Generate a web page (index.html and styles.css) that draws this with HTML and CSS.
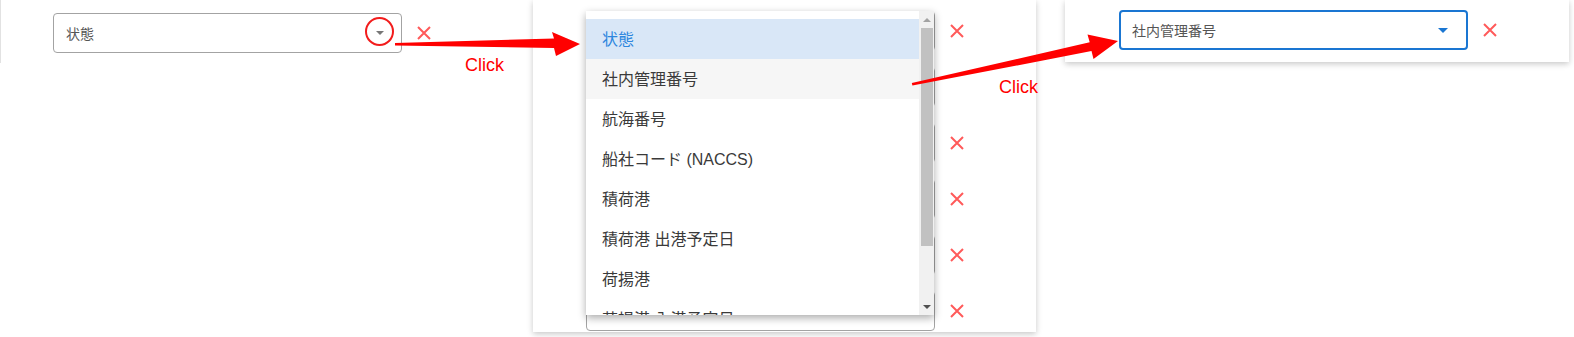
FILE: index.html
```html
<!DOCTYPE html>
<html lang="ja">
<head>
<meta charset="utf-8">
<title>Select annotation</title>
<link rel="stylesheet" href="styles.css">
</head>
<body>
<div class="stage">
  <div class="panel p1">
    <div class="row">
      <div class="select">
        <span class="val">状態</span>
        <span class="caret"></span>
        <span class="ring"></span>
      </div>
      <svg class="x" viewBox="0 0 14 14"><path d="M1 1L13 13M13 1L1 13"/></svg>
    </div>
  </div>

  <div class="panel p2">
    <div class="rows">
      <div class="row"><div class="select"><span class="val"></span><span class="caret"></span></div><svg class="x" viewBox="0 0 14 14"><path d="M1 1L13 13M13 1L1 13"/></svg></div>
      <div class="row"><div class="select"><span class="val"></span><span class="caret"></span></div><svg class="x hidden" viewBox="0 0 14 14"><path d="M1 1L13 13M13 1L1 13"/></svg></div>
      <div class="row"><div class="select"><span class="val"></span><span class="caret"></span></div><svg class="x" viewBox="0 0 14 14"><path d="M1 1L13 13M13 1L1 13"/></svg></div>
      <div class="row"><div class="select"><span class="val"></span><span class="caret"></span></div><svg class="x" viewBox="0 0 14 14"><path d="M1 1L13 13M13 1L1 13"/></svg></div>
      <div class="row"><div class="select"><span class="val"></span><span class="caret"></span></div><svg class="x" viewBox="0 0 14 14"><path d="M1 1L13 13M13 1L1 13"/></svg></div>
      <div class="row"><div class="select"><span class="val"></span><span class="caret"></span></div><svg class="x" viewBox="0 0 14 14"><path d="M1 1L13 13M13 1L1 13"/></svg></div>
    </div>
    <div class="menu">
      <div class="items">
        <div class="item sel">状態</div>
        <div class="item hover">社内管理番号</div>
        <div class="item">航海番号</div>
        <div class="item">船社コード (NACCS)</div>
        <div class="item">積荷港</div>
        <div class="item">積荷港 出港予定日</div>
        <div class="item">荷揚港</div>
        <div class="item">荷揚港 入港予定日</div>
      </div>
      <div class="sb">
        <div class="sb-btn"><span class="tri-up"></span></div>
        <div class="sb-track"><div class="thumb"></div></div>
        <div class="sb-btn"><span class="tri-down"></span></div>
      </div>
    </div>
  </div>

  <div class="panel p3">
    <div class="row">
      <div class="select focus">
        <span class="val">社内管理番号</span>
        <span class="caret blue"></span>
      </div>
      <svg class="x" viewBox="0 0 14 14"><path d="M1 1L13 13M13 1L1 13"/></svg>
    </div>
  </div>

  <svg class="arrows" width="1574" height="337" viewBox="0 0 1574 337">
    <polygon points="395,43 554,38.5 552,32 580,44 556,56 554,48 395,45.5"/>
    <polygon points="911.8,83 1089.7,42.3 1087.5,34.5 1118,41 1093.5,59 1091.5,51.1 912.4,85.6"/>
  </svg>
  <div class="click c1">Click</div>
  <div class="click c2">Click</div>
</div>
</body>
</html>
```

FILE: styles.css
```css
html, body {
  margin: 0;
  padding: 0;
  background: #ffffff;
}

body {
  font-family: "Liberation Sans", "Noto Sans CJK JP", sans-serif;
}

.stage {
  position: relative;
  width: 1574px;
  height: 337px;
  display: flex;
  align-items: flex-start;
  gap: 29px;
  overflow: hidden;
}

.panel {
  box-sizing: border-box;
  background: #ffffff;
  flex: none;
}

.p1 {
  width: 504px;
  height: 63px;
  border-left: 1px solid #e2e2e2;
  padding: 13px 0 0 52px;
}

.p2 {
  position: relative;
  width: 503px;
  height: 332px;
  padding: 11px 0 0 53px;
  box-shadow: 0 2px 6px rgba(0, 0, 0, 0.22);
}

.p3 {
  width: 504px;
  height: 62px;
  padding: 10px 0 0 54px;
  box-shadow: 0 2px 6px rgba(0, 0, 0, 0.22);
}

.rows {
  display: flex;
  flex-direction: column;
  gap: 16px;
}

.row {
  display: flex;
  align-items: center;
  gap: 15px;
  height: 40px;
}

.select {
  position: relative;
  box-sizing: border-box;
  width: 349px;
  height: 40px;
  border: 1px solid #a3a3a3;
  border-radius: 4px;
  display: flex;
  align-items: center;
  padding: 0 17px 0 12px;
  font-size: 14px;
  color: #555555;
  background: #ffffff;
}

.select.focus {
  border: 2px solid #1a76d2;
  padding: 0 18px 0 11px;
}

.val {
  flex: 1;
  white-space: nowrap;
}

.caret {
  width: 0;
  height: 0;
  border-left: 4px solid transparent;
  border-right: 4px solid transparent;
  border-top: 4px solid #777777;
}

.caret.blue {
  border-left-width: 5px;
  border-right-width: 5px;
  border-top: 5px solid #1a76d2;
}

.ring {
  position: absolute;
  left: 311px;
  top: 3px;
  width: 29px;
  height: 29px;
  box-sizing: border-box;
  border: 2px solid #f21c1c;
  border-radius: 50%;
}

.x {
  width: 14px;
  height: 14px;
  flex: none;
}

.x path {
  fill: none;
  stroke: #ff5a5a;
  stroke-width: 2;
}

.x.hidden {
  visibility: hidden;
}

.menu {
  position: absolute;
  left: 53px;
  top: 11px;
  width: 348px;
  height: 304px;
  background: #ffffff;
  display: flex;
  box-shadow: 0 3px 8px rgba(0, 0, 0, 0.33);
  z-index: 2;
}

.items {
  flex: 1;
  padding-top: 8px;
  overflow: hidden;
}

.item {
  box-sizing: border-box;
  height: 40px;
  display: flex;
  align-items: center;
  padding: 0 0 3px 16px;
  font-size: 16px;
  color: #3a3a3a;
  white-space: nowrap;
}

.item.sel {
  background: #d9e7f7;
  color: #2d86de;
}

.item.hover {
  background: #f6f6f6;
}

.sb {
  width: 15px;
  background: #f1f1f1;
  display: flex;
  flex-direction: column;
}

.sb-btn {
  height: 17px;
  display: flex;
  align-items: center;
  justify-content: center;
}

.sb-track {
  flex: 1;
  padding-left: 2px;
}

.thumb {
  width: 12px;
  height: 218px;
  background: #c1c1c1;
}

.tri-up {
  width: 0;
  height: 0;
  border-left: 4px solid transparent;
  border-right: 4px solid transparent;
  border-bottom: 4px solid #a3a3a3;
}

.tri-down {
  width: 0;
  height: 0;
  border-left: 4px solid transparent;
  border-right: 4px solid transparent;
  border-top: 4px solid #505050;
}

.arrows {
  position: absolute;
  left: 0;
  top: 0;
  z-index: 5;
  pointer-events: none;
}

.arrows polygon {
  fill: #ff0000;
}

.click {
  position: absolute;
  z-index: 5;
  font-family: "Liberation Sans", Arial, sans-serif;
  font-size: 18px;
  line-height: 20px;
  color: #ff0000;
}

.c1 {
  left: 465px;
  top: 55px;
}

.c2 {
  left: 999px;
  top: 77px;
}
```
